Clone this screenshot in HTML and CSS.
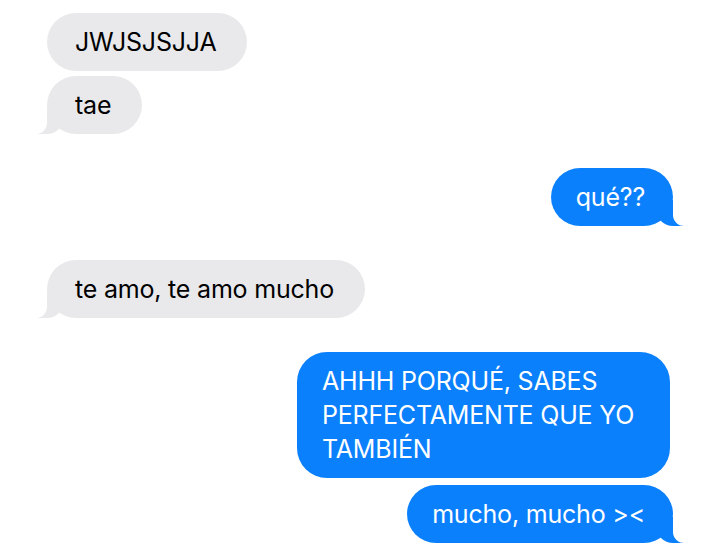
FILE: index.html
```html
<!DOCTYPE html>
<html lang="es">
<head>
<meta charset="utf-8">
<title>Mensajes</title>
<link rel="stylesheet" href="styles.css">
</head>
<body>
<main class="chat">
  <div class="msg recv first">JWJSJSJJA</div>
  <div class="msg recv tail gap-s">tae</div>
  <div class="msg sent tail gap-l">qué??</div>
  <div class="msg recv tail gap-l">te amo, te amo mucho</div>
  <div class="msg sent wide gap-l">AHHH PORQUÉ, SABES PERFECTAMENTE QUE YO TAMBIÉN</div>
  <div class="msg sent tail gap-m">mucho, mucho &gt;&lt;</div>
</main>
</body>
</html>
```
FILE: styles.css
```css
html, body {
  margin: 0;
  padding: 0;
  background: #ffffff;
}

.chat {
  width: 720px;
  height: 560px;
  box-sizing: border-box;
  padding: 13px 47px 0 47px;
  display: flex;
  flex-direction: column;
  overflow: hidden;
  font-family: Inter, "Noto Sans", sans-serif;
  font-size: 25px;
  line-height: 34px;
  letter-spacing: -0.2px;
}

.msg {
  position: relative;
  box-sizing: border-box;
  padding: 12px 31px 12px 28px;
  border-radius: 29px;
  max-width: 373px;
}

.gap-s { margin-top: 5px; }
.gap-m { margin-top: 7px; }
.gap-l { margin-top: 34px; }

.recv {
  align-self: flex-start;
  background: #e9e9eb;
  color: #000000;
}

.sent {
  align-self: flex-end;
  background: #0b80fd;
  color: #ffffff;
  padding-left: 25px;
  padding-right: 28px;
}

.wide {
  border-radius: 30px;
  padding-right: 20px;
  margin-right: 3px;
}

.tail::before,
.tail::after {
  content: "";
  position: absolute;
  bottom: 0;
}

.recv.tail::before {
  left: -9px;
  width: 26px;
  height: 26px;
  background: #e9e9eb;
  border-bottom-right-radius: 17px;
}

.recv.tail::after {
  left: -13px;
  width: 13px;
  height: 26px;
  background: #ffffff;
  border-bottom-right-radius: 11px;
}

.sent.tail::before {
  right: -11px;
  width: 28px;
  height: 26px;
  background: #0b80fd;
  border-bottom-left-radius: 17px;
}

.sent.tail::after {
  right: -15px;
  width: 15px;
  height: 26px;
  background: #ffffff;
  border-bottom-left-radius: 11px;
}
```
